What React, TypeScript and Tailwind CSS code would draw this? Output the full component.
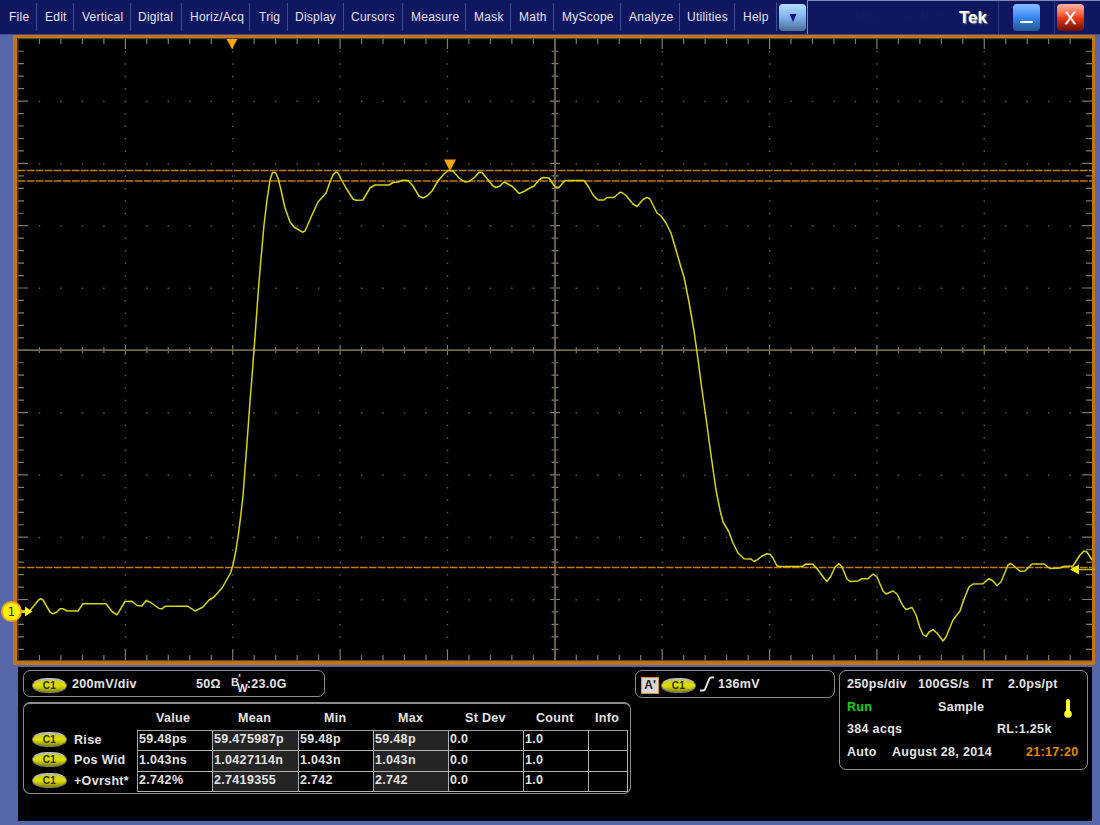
import React from "react";

const menu: { label: string; cell: string }[] = [
  { label: "File", cell: "w-[37px] pl-[9px]" },
  { label: "Edit", cell: "w-[37px] pl-[8px]" },
  { label: "Vertical", cell: "w-[57px] pl-[8px]" },
  { label: "Digital", cell: "w-[51px] pl-[7px]" },
  { label: "Horiz/Acq", cell: "w-[68px] pl-[8px]" },
  { label: "Trig", cell: "w-[38px] pl-[9px]" },
  { label: "Display", cell: "w-[56px] pl-[7px]" },
  { label: "Cursors", cell: "w-[59px] pl-[7px]" },
  { label: "Measure", cell: "w-[63px] pl-[8px]" },
  { label: "Mask", cell: "w-[45px] pl-[8px]" },
  { label: "Math", cell: "w-[43px] pl-[8px]" },
  { label: "MyScope", cell: "w-[67px] pl-[8px]" },
  { label: "Analyze", cell: "w-[59px] pl-[8px]" },
  { label: "Utilities", cell: "w-[55px] pl-[7px]" },
  { label: "Help", cell: "w-[42px] pl-[8px]" },
];

const wave =
  "30,610.5 39,599.5 41,598.7 43,600 50,612 53,613.8 57,612 60,608.7 63,608.7 67,611 78,611 83,603.7 106,603.7 112,611.5 117,614.8 125,601.5 132,601.3 137,605.5 142,606 146,600.7 150,602 159,608.5 162,608.8 165,606.3 188,606.3 195,611 203,607 209,600 214,597 222,588 228,577.5 230.5,573 233,565 236,550 238,537 240,522 243,496 246,456 248,429 250,401 252,377 254,350 256,323 258,295 260,270 264,225 267,200 270,180 272.5,172.5 275.5,172.5 278,178 281,190 285,208 290,222 294,227 298,229.5 302.5,232.2 305,231 312,215 318,202 326,193 330,182 333,175 336,172 338,173 341,179 346,188 353,199 356,200.3 363,200 370,188 375,185 389,185 393,182.5 398,182 403,180.3 408,180.5 413,186 419,196 423,198 427,196 432,191 438,181 444,174 448,170.5 453,171 459,178 465,182 469,181.5 475,177 479,172.3 482,172.5 489,181 493,186 496,187.5 500,186 504,182 508,184 513,187 519,193.5 524,191.5 529,188.5 534,186 539,180 543,177.5 549,178 555,187 559,187.5 565,180.5 584,180.5 588,186 593,195 598,200 604,200 607,197.5 614,197.5 620,192.3 622,192.5 626,195.5 633,204 637,206.5 643,199.5 647,197.3 650,199 657,213 661,216 666,223 671,233 676,250 680,264 684,277 689,302 694,331 697,352 702,390 706,418 711,455 716,490 720,510 723,522 729,532 733,543 738,553 744,558.7 751,559 754,561.5 757,560 762,556 767,553.7 770,554.3 773,558 777,566 780,566.5 802,566.5 806,564 813,564.2 818,570 824,578 827,581.5 831,576 835,567 839,563.7 842,567 847,579 850,581.5 858,581 862,578.7 868,578.7 873,574 877,577 883,591 886,594 893,591 897,594 903,606 906,609.5 912,607.5 916,615 920,628 923,634.5 926,636.5 929,632 933,629.7 937,633 943,641 946,637 953,620 960,611 964,599 969,587 973,584 983,583.7 989,578.7 993,581 997,585.5 1001,582 1008,565 1011,563.5 1014,566 1020,571.3 1025,571 1032,564 1044,564 1050,568.5 1060,568 1063,566.5 1073,566 1080,555 1084,551 1087,552 1092,560";

const X0 = 18;
const DX = 21.473;
const CY = 350;
const DY = 12.46;

function Grid() {
  const dots: React.ReactNode[] = [];
  const ticks: React.ReactNode[] = [];
  for (let i = 1; i < 50; i++) {
    const x = X0 + i * DX;
    const major = i % 5 === 0;
    const t = major ? 11 : 6;
    const c = major ? 5 : 3;
    ticks.push(
      <path
        key={"v" + i}
        d={`M${x} 38v${t} M${x} ${CY - c}v${2 * c} M${x} ${661 - t}v${t}`}
      />
    );
    for (let j = -20; j <= 20; j += 5) {
      if (j !== 0) dots.push(<rect key={`h${i}_${j}`} x={x - 0.75} y={CY + 0.6 + j * DY - 0.75} width="1.5" height="1.5" />);
    }
    if (major && i !== 25) {
      for (let j = -24; j <= 24; j++) {
        if (j % 5 !== 0) dots.push(<rect key={`d${i}_${j}`} x={x - 0.75} y={CY + 0.6 + j * DY - 0.75} width="1.5" height="1.5" />);
      }
    }
  }
  for (let j = -24; j <= 24; j++) {
    const y = CY + 0.3 + j * DY;
    const major = j % 5 === 0;
    const t = major ? 10 : 6;
    const c = major ? 5 : 3.5;
    ticks.push(
      <path
        key={"r" + j}
        d={`M18 ${y}h${t} M${555 - c} ${y}h${2 * c} M${1092 - t} ${y}h${t}`}
      />
    );
  }
  return (
    <>
      <g fill="#5c594e">{dots}</g>
      <g stroke="#857b60" strokeWidth="1.2">{ticks}</g>
      <path d="M18 350.2H1092 M555 38V661" stroke="#6f674f" strokeWidth="1.8" />
      <path d="M17.9 661V38.7H1092 M17.5 660.7H1092" stroke="#625846" strokeWidth="1" fill="none" />
    </>
  );
}

function Graticule() {
  return (
    <div className="ml-[13px] h-[630px] w-[1082px] shrink-0 border-t-[3px] border-r-[3px] border-b-[4px] border-l-[4px] border-[#c47510] bg-black">
      <svg className="block h-[623px] w-[1075px] overflow-visible" viewBox="17 38 1075 623">
        <Grid />
        <g stroke="#c07c08" strokeWidth="1.5" strokeDasharray="7.6 1.4">
          <path d="M18 170.5H1092" />
          <path d="M18 181H1092" />
          <path d="M18 567.5H1092" />
        </g>
        <polyline points={wave} fill="none" stroke="#d6d60c" strokeWidth="1.5" strokeLinejoin="round" />
        <path d="M226.5 39h11l-5.5 10z" fill="#ffa60a" />
        <path d="M444 159.5h12l-6 11.5z" fill="#ffa60a" />
        <path d="M1070 569.5l9-5v10z" fill="#fff200" />
        <path d="M1078 569.5h17" stroke="#b9b00c" strokeWidth="1.6" />
        <path d="M20 611.5h8" stroke="#ffe800" strokeWidth="2.5" />
        <path d="M25 606.5l7.500 5-7.500 5z" fill="#fff200" />
        <circle cx="11.5" cy="611.5" r="9.600" fill="#fff200" stroke="#f5a21a" strokeWidth="1.8" />
        <text x="11.5" y="615.7" textAnchor="middle" fontFamily="DejaVu Sans, sans-serif" fontSize="11.5" fill="#2c2a00">1</text>
      </svg>
    </div>
  );
}

function Pill() {
  return (
    <span className="flex h-[15px] w-[35px] shrink-0 items-center justify-center rounded-[50%/60%] border border-t-2 border-[#77776a] border-t-[#b8b8b4] bg-linear-to-b from-[#cfcf20] via-[#dede00] to-[#87870a] text-[10px] leading-none tracking-[0.3px] text-[#303000]">
      C1
    </span>
  );
}

const headers: { label: string; cell: string }[] = [
  { label: "Value", cell: "w-[82px]" },
  { label: "Mean", cell: "w-[86px]" },
  { label: "Min", cell: "w-[74px]" },
  { label: "Max", cell: "w-[67px]" },
  { label: "St Dev", cell: "w-[71px]" },
  { label: "Count", cell: "w-[59px]" },
  { label: "Info", cell: "w-[34px]" },
];

const rows = [
  { name: "Rise", v: ["59.48ps", "59.475987p", "59.48p", "59.48p", "0.0", "1.0", ""] },
  { name: "Pos Wid", v: ["1.043ns", "1.0427114n", "1.043n", "1.043n", "0.0", "1.0", ""] },
  { name: "+Ovrsht*", v: ["2.742%", "2.7419355", "2.742", "2.742", "0.0", "1.0", ""] },
];

function Measurements() {
  return (
    <div className="h-[92px] w-[608px] rounded-[7px] border-[1.5px] border-t-2 border-[#8c8c8c]">
      <div className="flex h-[26px] items-center pl-[132px] pt-[3px]">
        {headers.map((h) => (
          <span key={h.label} className={h.cell}>
            {h.label}
          </span>
        ))}
      </div>
      <div className="flex">
        <div className="w-[113px]">
          {rows.map((r) => (
            <div key={r.name} className="flex h-[20.5px] items-center gap-[7px] whitespace-nowrap pl-[8px]">
              <span className="-mt-[2px]">
                <Pill />
              </span>
              <span className="-mt-px">{r.name}</span>
            </div>
          ))}
        </div>
        <div className="grid grid-cols-[75px_86px_75px_75px_75px_65px_39px] border-l border-t border-[#a0a0a0]">
          {rows.flatMap((r) =>
            r.v.map((v, i) => (
              <div
                key={r.name + i}
                className={
                  "flex h-[20.3px] items-center border-b border-r border-[#b0b0b0] pl-px pb-[2px] " +
                  (i === 1 || i === 3 ? "bg-[#242424]" : "bg-black")
                }
              >
                {v}
              </div>
            ))
          )}
        </div>
      </div>
    </div>
  );
}

function Readouts() {
  return (
    <div className="ml-[18px] mt-[2px] flex h-[154px] w-[1074px] shrink-0 items-start bg-black pl-[5px] pt-[3px] font-bold text-[12.5px] tracking-[0.32px] text-[#e4e4e4] leading-none">
      <div className="flex flex-col gap-[5px]">
        <div className="flex h-[27px] w-[302px] items-center rounded-[7px] border-[1.5px] border-[#8c8c8c] pl-[8px] pt-[2px]">
          <span className="mt-px">
            <Pill />
          </span>
          <span className="ml-[5px] w-[124px]">200mV/div</span>
          <span className="w-[35px]">50Ω</span>
          <span className="-mt-1 text-[11px]">B</span>
          <span className="-ml-px -mt-3 w-[2px] text-[11px]">'</span>
          <span className="-ml-[3px] mt-2 text-[11px] tracking-normal">W</span>
          <span className="-ml-px">:23.0G</span>
        </div>
        <Measurements />
      </div>
      <div className="ml-[4px] flex h-[28px] w-[200px] items-center rounded-[7px] border-[1.5px] border-[#8c8c8c] pl-[5px]">
        <span className="mt-[2px] flex h-[17px] w-[18px] justify-center border-[1.5px] border-[#e0901c] bg-[#d8d8d8] pt-px text-[12px] tracking-normal text-[#181818]">
          A'
        </span>
        <span className="ml-[2px] mt-[2px]">
          <Pill />
        </span>
        <svg className="ml-[3px] h-[16px] w-[16px]" viewBox="0 0 16 16">
          <path d="M1 14.500h3q1.500 0 2.200-1.700l4-9.600q.7-1.700 2.300-1.700h2.500" fill="none" stroke="#e4e4e4" strokeWidth="1.9" />
        </svg>
        <span className="ml-[3px]">136mV</span>
      </div>
      <div className="ml-[4px] flex h-[100px] w-[249px] flex-col rounded-[7px] border-[1.5px] border-[#8c8c8c] pl-[7px] pt-[2px]">
        <div className="flex h-[22.700px] items-center whitespace-nowrap">
          <span className="w-[71px]">250ps/div</span>
          <span className="w-[64px]">100GS/s</span>
          <span className="w-[26px]">IT</span>
          <span>2.0ps/pt</span>
        </div>
        <div className="flex h-[22.700px] items-center">
          <span className="w-[91px] text-[#00d600]">Run</span>
          <span className="w-[125px]">Sample</span>
          <svg className="mt-[3px] h-[19px] w-[10px]" viewBox="0 0 10 19">
            <path d="M5 2v12" stroke="#ffff30" strokeWidth="4" strokeLinecap="round" />
            <circle cx="5" cy="15" r="3.800" fill="#ffff30" />
          </svg>
        </div>
        <div className="flex h-[22.700px] items-center">
          <span className="w-[150px]">384 acqs</span>
          <span>RL:1.25k</span>
        </div>
        <div className="flex h-[22.700px] items-center whitespace-nowrap">
          <span className="w-[45px]">Auto</span>
          <span className="w-[134px]">August 28, 2014</span>
          <span className="text-[#e08a00]">21:17:20</span>
        </div>
      </div>
    </div>
  );
}

export default function App() {
  return (
    <div className="flex h-[825px] w-[1100px] flex-col overflow-hidden bg-[#5567a8] font-['Liberation_Sans',Arial,sans-serif]">
      <div className="flex h-[35px] shrink-0 items-stretch border-b border-[#3f4c92] bg-[#10165f]">
        <div className="flex w-[807px] items-center">
          {menu.map((m) => (
            <div
              key={m.label}
              className={"flex h-[28px] shrink-0 items-center whitespace-nowrap border-r border-[#35508c] text-xs tracking-[0.25px] text-[#e4e4ee] " + m.cell}
            >
              {m.label}
            </div>
          ))}
          <div className="ml-[2px] flex h-[27px] w-[27px] items-center justify-center rounded-[4px] bg-linear-to-b from-[#b5dcff] via-[#7fb3ee] to-[#4a6d94]">
            <svg className="mt-[2px] h-[8px] w-[8px]" viewBox="0 0 8 8">
              <path d="M0.500 0h7L4 8z" fill="#0b1280" />
            </svg>
          </div>
        </div>
        <div className="flex flex-1 items-center border-l border-t border-[#8088b4]">
          <span className="ml-[47px] w-[104px] text-[14px] text-[#141a62]">MSO72304DX</span>
          <span className="w-[39px] text-[17px] font-bold text-white [text-shadow:1px_1px_1px_#a09890]">Tek</span>
          <div className="flex h-full w-[57px] items-center justify-center border-l border-r border-[#2f3a80]">
            <div className="flex h-[27px] w-[27px] items-end justify-center rounded-[4px] bg-linear-to-b from-[#88bdff] via-[#3588f4] to-[#245590] pb-[8px]">
              <div className="h-[2px] w-[13px] bg-white" />
            </div>
          </div>
          <div className="ml-[2px] flex h-[27px] w-[27px] items-center justify-center rounded-[4px] bg-linear-to-b from-[#ffb5a5] via-[#f53a12] to-[#6a1008] pt-[2px] text-[17px] leading-none text-white [-webkit-text-stroke:0.4px_white]">
            X
          </div>
        </div>
      </div>
      <Graticule />
      <Readouts />
    </div>
  );
}
